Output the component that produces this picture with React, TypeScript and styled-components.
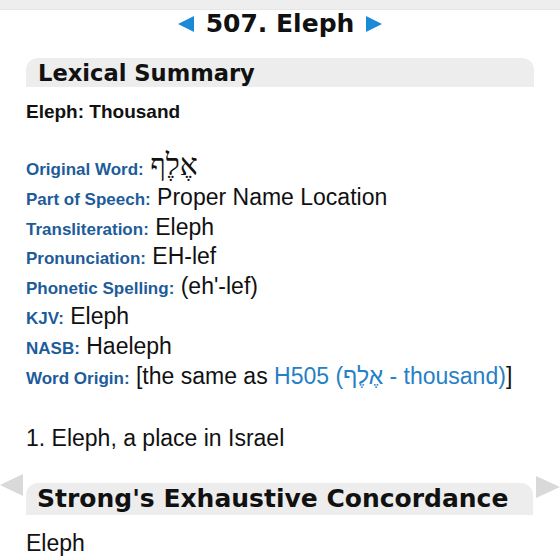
import React from 'react';
import styled, { createGlobalStyle } from 'styled-components';

const GlobalStyle = createGlobalStyle`
    html, body {
        margin: 0;
        padding: 0;
        background: #fff;
    }
    body {
        font-family: "Liberation Sans", Arial, sans-serif;
        color: #111;
    }
`;

const Page = styled.div`
    width: 560px;
    height: 560px;
    overflow: hidden;
`;

const TopStrip = styled.div`
    height: 10px;
    background: #eeeeee;
    border-bottom: 1px solid #e6e6e6;
    box-sizing: border-box;
`;

const Header = styled.div`
    display: flex;
    justify-content: center;
    align-items: center;
    gap: 12px;
    height: 29px;
    margin-top: -1px;
`;

const Title = styled.h1`
    margin: 0;
    font-family: "DejaVu Sans", Verdana, sans-serif;
    font-weight: bold;
    font-size: 25px;
    line-height: 29px;
    color: #111;
`;

const Content = styled.div`
    padding: 0 26px 0 26px;
`;

const SectionBar = styled.div<{ $big?: boolean }>`
    background: #ededed;
    border-radius: 12px 12px 0 0;
    box-sizing: border-box;
    height: ${p => (p.$big ? 32 : 29)}px;
    line-height: ${p => (p.$big ? 32 : 29)}px;
    padding-left: ${p => (p.$big ? 11 : 12)}px;
    font-family: "DejaVu Sans", Verdana, sans-serif;
    font-weight: bold;
    font-size: ${p => (p.$big ? 25 : 22.6)}px;
    color: #111;
    white-space: nowrap;
`;

const LexicalBar = styled(SectionBar)`
    margin-top: 20px;
    padding-top: 2px;
    line-height: 27px;
`;

const Summary = styled.div`
    margin-top: 14px;
    font-weight: bold;
    font-size: 19px;
`;

const Rows = styled.div`
    margin-top: 30px;
    display: flex;
    flex-direction: column;
`;

const Row = styled.div`
    height: 29.8px;
    line-height: 29.8px;
    font-size: 23px;
    white-space: nowrap;
`;

const Label = styled.span`
    font-weight: bold;
    font-size: 17px;
    color: #1d5c9a;
`;

const Hebrew = styled.span`
    font-family: "Liberation Serif", "DejaVu Serif", serif;
    font-size: 30px;
    line-height: 20px;
    vertical-align: baseline;
`;

const Link = styled.span`
    color: #2680c6;
`;

const Definition = styled.div`
    margin-top: 33px;
    font-size: 23px;
    line-height: 29.7px;
`;

const StrongsRow = styled.div`
    display: flex;
    margin-top: 29px;
`;

const SideNav = styled.div<{ $side: 'left' | 'right' }>`
    width: ${p => (p.$side === 'left' ? 26 : 27)}px;
    display: flex;
    justify-content: ${p => (p.$side === 'left' ? 'flex-start' : 'flex-end')};
    align-items: flex-start;
    svg {
        margin-top: ${p => (p.$side === 'left' ? -9 : -7)}px;
    }
`;

const StrongsBar = styled(SectionBar)`
    flex: 1;
`;

const Word = styled.div`
    margin-top: 14px;
    font-size: 23px;
    line-height: 29.7px;
`;

const Arrow: React.FC<{ dir: 'left' | 'right'; color: string; w: number; h: number }> = ({ dir, color, w, h }) => (
    <svg width={w} height={h} viewBox={`0 0 ${w} ${h}`}>
        {dir === 'left'
            ? <polygon points={`${w},0 ${w},${h} 0,${h / 2}`} fill={color} />
            : <polygon points={`0,0 0,${h} ${w},${h / 2}`} fill={color} />}
    </svg>
);

const fields: { label: string; value: React.ReactNode }[] = [
    { label: 'Part of Speech', value: 'Proper Name Location' },
    { label: 'Transliteration', value: 'Eleph' },
    { label: 'Pronunciation', value: 'EH-lef' },
    { label: 'Phonetic Spelling', value: "(eh'-lef)" },
    { label: 'KJV', value: 'Eleph' },
    { label: 'NASB', value: 'Haeleph' },
];

export default function App() {
    return (
        <Page>
            <GlobalStyle />
            <TopStrip />
            <Header>
                <Arrow dir="left" color="#1a8ad6" w={16} h={16} />
                <Title>507. Eleph</Title>
                <Arrow dir="right" color="#1a8ad6" w={16} h={16} />
            </Header>
            <Content>
                <LexicalBar>Lexical Summary</LexicalBar>
                <Summary>Eleph: Thousand</Summary>
                <Rows>
                    <Row>
                        <Label>Original Word:</Label> <Hebrew dir="rtl">אֶלֶף</Hebrew>
                    </Row>
                    {fields.map(f => (
                        <Row key={f.label}>
                            <Label>{f.label}:</Label> {f.value}
                        </Row>
                    ))}
                    <Row>
                        <Label>Word Origin:</Label> [the same as <Link>H505 (<span dir="rtl">אֶלֶף</span> - thousand)</Link>]
                    </Row>
                </Rows>
                <Definition>1. Eleph, a place in Israel</Definition>
            </Content>
            <StrongsRow>
                <SideNav $side="left">
                    <Arrow dir="left" color="#d9d9d9" w={23} h={22} />
                </SideNav>
                <StrongsBar $big>Strong's Exhaustive Concordance</StrongsBar>
                <SideNav $side="right">
                    <Arrow dir="right" color="#d9d9d9" w={24} h={22} />
                </SideNav>
            </StrongsRow>
            <Content>
                <Word>Eleph</Word>
            </Content>
        </Page>
    );
}
